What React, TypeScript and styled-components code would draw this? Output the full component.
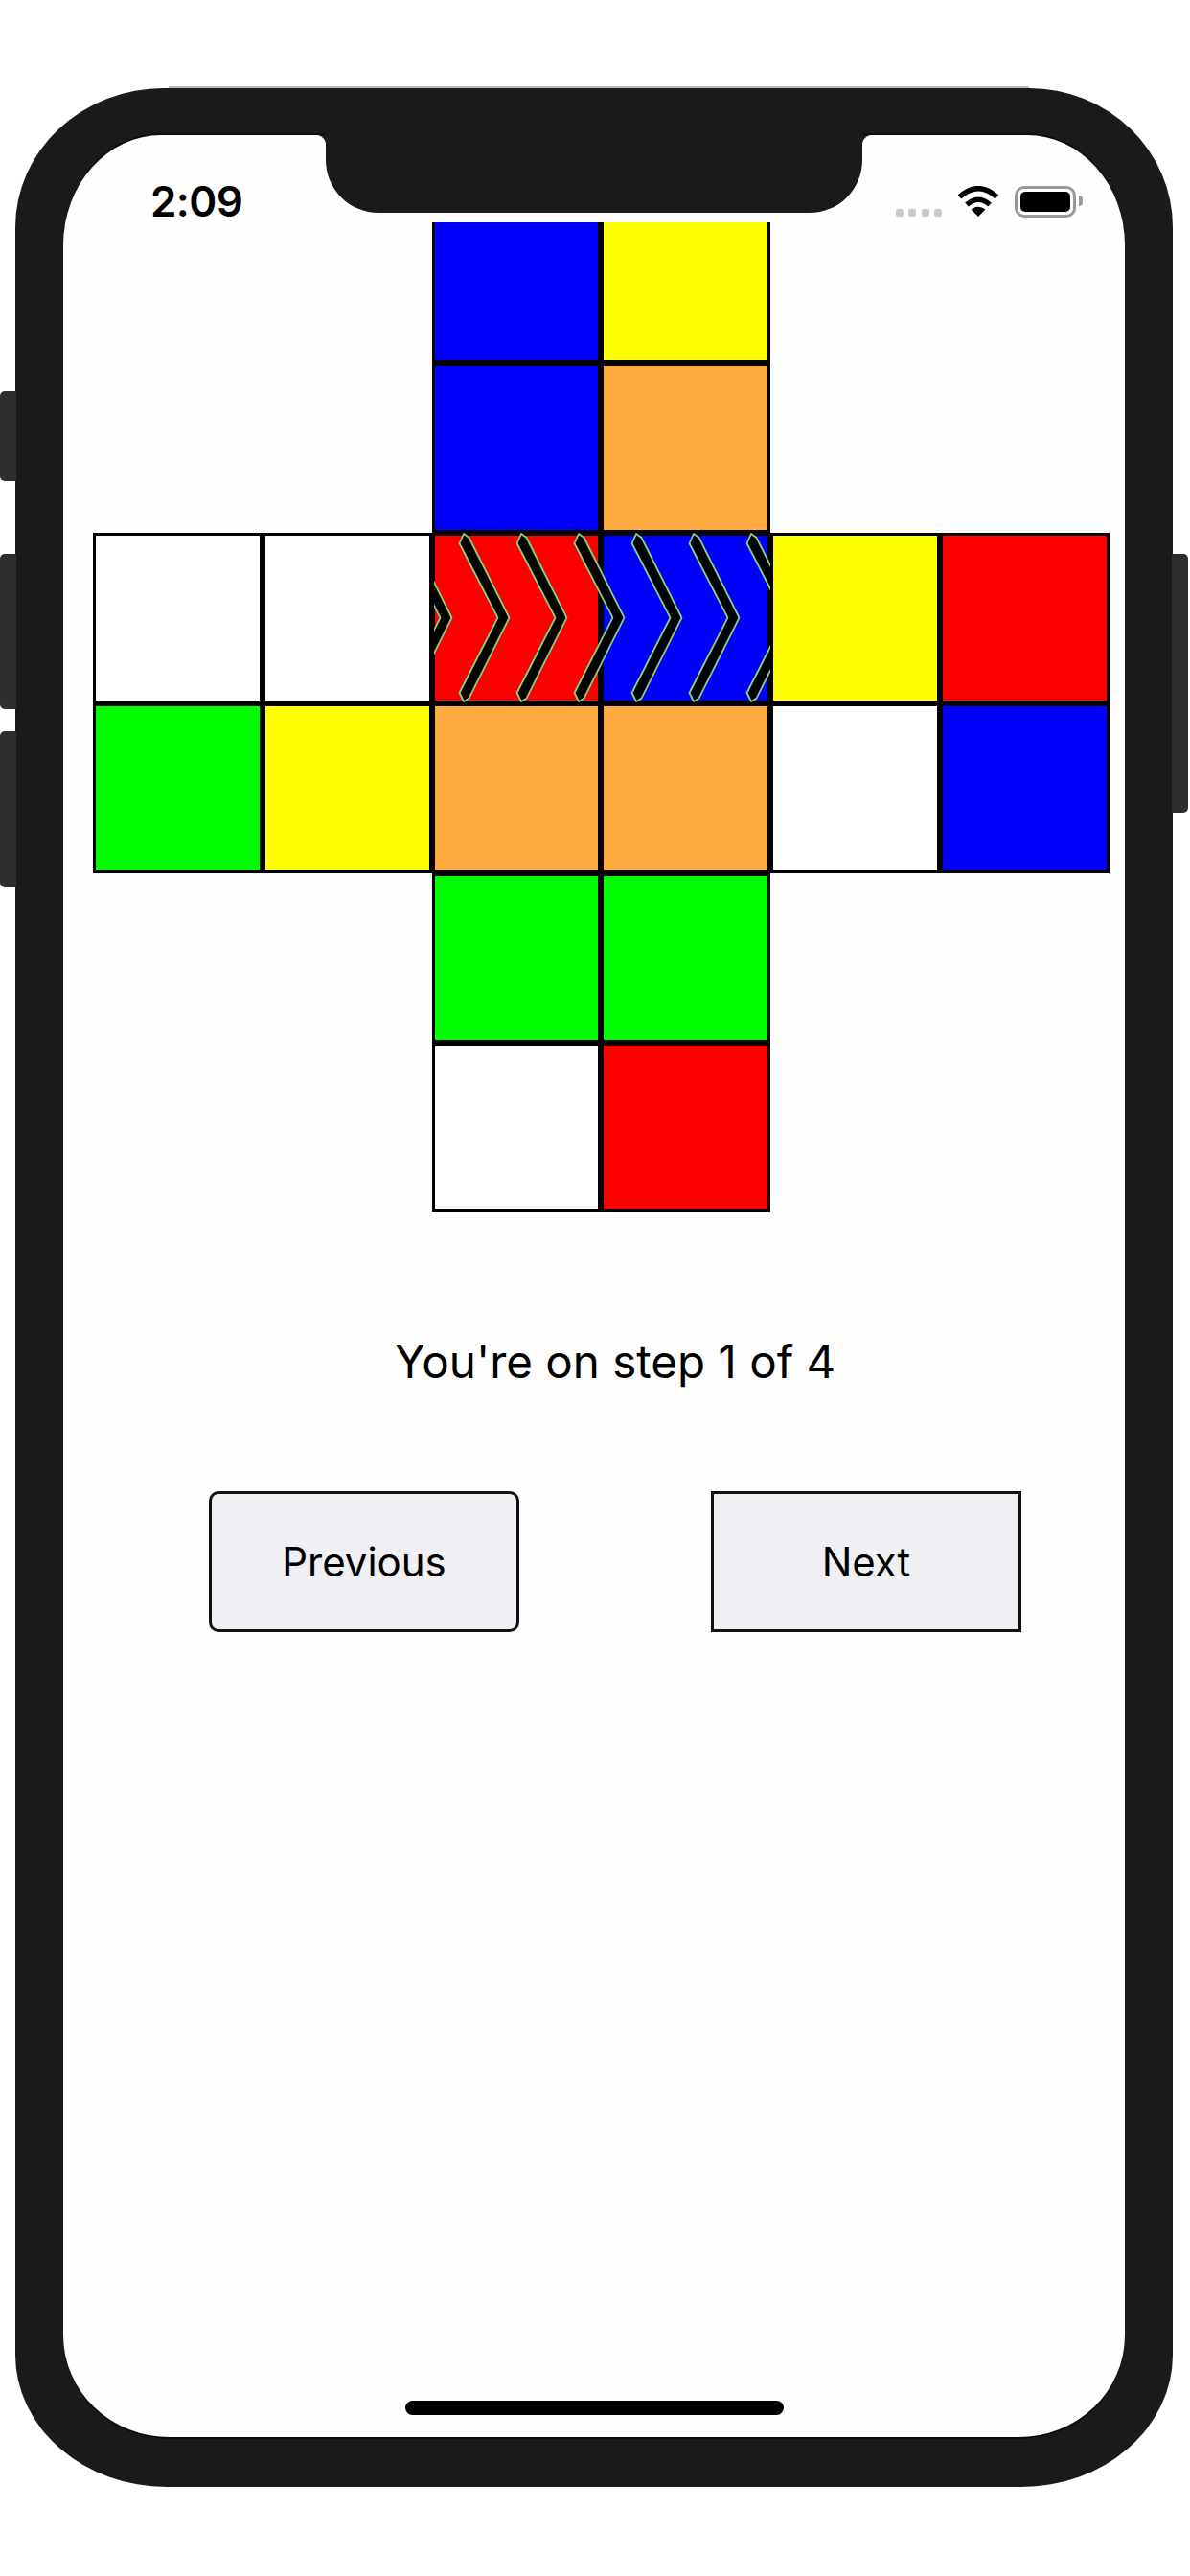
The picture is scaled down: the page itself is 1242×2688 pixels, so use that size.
import React from "react";
import styled, { createGlobalStyle } from "styled-components";

const GlobalStyle = createGlobalStyle`
  html, body {
    margin: 0;
    padding: 0;
    background: #fff;
  }
  body {
    font-family: Inter, "Liberation Sans", sans-serif;
    color: #000;
  }
`;

const Page = styled.div`
  width: 1242px;
  height: 2688px;
  padding: 92px 0 0 16px;
  box-sizing: border-box;
  overflow: hidden;
`;

const Device = styled.div`
  position: relative;
  width: 1208px;
  height: 2503px;
  padding: 49px 50px 52px 50px;
  box-sizing: border-box;
  background: #1a1a1a;
  border-radius: 155px 150px 158px 158px / 145px 145px 138px 138px;
`;

const TopEdge = styled.div`
  position: absolute;
  top: -2px;
  left: 160px;
  right: 150px;
  height: 2px;
  background: #bbb;
`;

const SideKey = styled.div<{ $side: "left" | "right"; $top: number; $height: number }>`
  position: absolute;
  top: ${(p) => p.$top}px;
  height: ${(p) => p.$height}px;
  width: 17px;
  background: #2e2e2e;
  ${(p) =>
    p.$side === "left"
      ? "left: -16px; border-radius: 5px 0 0 5px;"
      : "right: -16px; border-radius: 0 5px 5px 0;"}
`;

const Screen = styled.div`
  position: relative;
  display: flex;
  flex-direction: column;
  width: 100%;
  height: 100%;
  background: #fefefe;
  border-radius: 102px 102px 111px 111px / 115px 115px 106px 106px;
  box-shadow: 0 -2px 0 #0c0c0c, 0 2px 0 #0c0c0c;
`;

const Notch = styled.div`
  position: absolute;
  top: -3px;
  left: 274px;
  width: 560px;
  height: 84px;
  background: #1a1a1a;
  border-radius: 0 0 55px 55px;

  &::before,
  &::after {
    content: "";
    position: absolute;
    top: 3px;
    width: 10px;
    height: 10px;
  }
  &::before {
    left: -10px;
    background: radial-gradient(circle at 0 100%, transparent 9.5px, #1a1a1a 10.5px);
  }
  &::after {
    right: -10px;
    background: radial-gradient(circle at 100% 100%, transparent 9.5px, #1a1a1a 10.5px);
  }
`;

const StatusBar = styled.div`
  display: flex;
  justify-content: space-between;
  align-items: flex-start;
  height: 91px;
  padding: 53px 44px 0 91px;
  box-sizing: border-box;
  flex: none;
`;

const Clock = styled.div`
  font-size: 44px;
  font-weight: 600;
  line-height: 33px;
  letter-spacing: -0.6px;
`;

const StatusIcons = styled.div`
  display: flex;
  align-items: flex-start;
`;

const SignalDots = styled.div`
  display: flex;
  gap: 5.5px;
  margin: 24px 16px 0 0;
`;

const SignalDot = styled.span`
  width: 8px;
  height: 8px;
  border-radius: 2.5px;
  background: #c9c9c9;
`;

const WifiIcon = styled.svg`
  display: block;
  width: 44px;
  height: 32px;
  margin-right: 16px;
`;

const Battery = styled.div`
  position: relative;
  width: 64px;
  height: 33px;
  padding: 3px;
  box-sizing: border-box;
  border: 3px solid #999;
  border-radius: 10px;
  margin-right: 7px;

  &::after {
    content: "";
    position: absolute;
    right: -10px;
    top: 7px;
    width: 4px;
    height: 11px;
    background: #999;
    border-radius: 0 5px 5px 0;
  }
`;

const BatteryFill = styled.div`
  width: 100%;
  height: 100%;
  background: #000;
  border-radius: 5px;
`;

const Net = styled.div`
  display: grid;
  grid-template-columns: repeat(6, 176.75px);
  grid-template-rows: 147px repeat(5, 177.25px);
  margin-left: 31px;
  flex: none;
`;

const Sticker = styled.div<{ $color: string; $col: number; $row: number }>`
  grid-column: ${(p) => p.$col};
  grid-row: ${(p) => p.$row};
  background: ${(p) => p.$color};
  border: 3px solid #000;
  ${(p) => (p.$row === 1 ? "border-top: none;" : "")}
  box-sizing: border-box;
`;

const ArrowLayer = styled.svg`
  grid-column: 3 / 5;
  grid-row: 3;
  display: block;
  width: 100%;
  height: 100%;
  pointer-events: none;
`;

const StepLabel = styled.div`
  margin: 126px 0 0 152px;
  width: 848px;
  text-align: center;
  font-size: 47.5px;
  line-height: 60px;
  flex: none;
`;

const Controls = styled.div`
  display: flex;
  justify-content: space-between;
  width: 848px;
  margin: 105px 0 0 152px;
  flex: none;
`;

const StepButton = styled.button<{ $rounded?: boolean }>`
  width: 324px;
  height: 147px;
  padding: 0;
  background: #efeff4;
  border: 3px solid #111;
  border-radius: ${(p) => (p.$rounded ? "10px" : "0")};
  font-family: inherit;
  font-size: 42px;
  color: #000;
`;

const HomeBar = styled.div`
  width: 395px;
  height: 15px;
  margin: auto auto 23px;
  border-radius: 8px;
  background: #000;
  flex: none;
`;

const BLUE = "#0000ff";
const YELLOW = "#ffff00";
const ORANGE = "#ffa941";
const RED = "#ff0000";
const GREEN = "#00ff00";
const WHITE = "#ffffff";

const stickers: [number, number, string][] = [
  [3, 1, BLUE],
  [4, 1, YELLOW],
  [3, 2, BLUE],
  [4, 2, ORANGE],
  [1, 3, WHITE],
  [2, 3, WHITE],
  [3, 3, RED],
  [4, 3, BLUE],
  [5, 3, YELLOW],
  [6, 3, RED],
  [1, 4, GREEN],
  [2, 4, YELLOW],
  [3, 4, ORANGE],
  [4, 4, ORANGE],
  [5, 4, WHITE],
  [6, 4, BLUE],
  [3, 5, GREEN],
  [4, 5, GREEN],
  [3, 6, WHITE],
  [4, 6, RED],
];

// one chevron drawn at the position of the second one, the rest are shifted copies
const CHEVRON = "33 1 38.5 5 80.5 88.7 38.5 172.7 33 176 28.5 167 68.5 88.7 28.5 11";
const arrowShifts = [-60, 0, 60, 120, 180, 240, 300];

function Arrows() {
  return (
    <ArrowLayer viewBox="0 0 353.5 177.25" preserveAspectRatio="none">
      <defs>
        <clipPath id="arrow-clip">
          <rect x="2" y="0" width="351.5" height="177.25" />
        </clipPath>
      </defs>
      <g clipPath="url(#arrow-clip)">
        {arrowShifts.map((shift) => (
          <polygon
            key={shift}
            points={CHEVRON}
            transform={`translate(${shift} 0)`}
            fill="#000"
            stroke="#86d47e"
            strokeWidth="1.8"
            strokeLinejoin="round"
          />
        ))}
      </g>
    </ArrowLayer>
  );
}

export default function App() {
  return (
    <Page>
      <GlobalStyle />
      <Device>
        <TopEdge />
        <SideKey $side="left" $top={316} $height={94} />
        <SideKey $side="left" $top={486} $height={162} />
        <SideKey $side="left" $top={671} $height={163} />
        <SideKey $side="right" $top={486} $height={270} />
        <Screen>
          <Notch />
          <StatusBar>
            <Clock>2:09</Clock>
            <StatusIcons>
              <SignalDots>
                <SignalDot />
                <SignalDot />
                <SignalDot />
                <SignalDot />
              </SignalDots>
              <WifiIcon viewBox="0 0 44 32">
                <path d="M2.5 11.5 Q22 -6 41.5 11.5" fill="none" stroke="#000" strokeWidth="5.5" />
                <path d="M10 19.5 Q22 9 34 19.5" fill="none" stroke="#000" strokeWidth="5.5" />
                <path d="M22 32 L14.5 24.5 Q22 19 29.5 24.5 Z" fill="#000" />
              </WifiIcon>
              <Battery>
                <BatteryFill />
              </Battery>
            </StatusIcons>
          </StatusBar>
          <Net>
            {stickers.map(([col, row, color]) => (
              <Sticker key={`${col}-${row}`} $col={col} $row={row} $color={color} />
            ))}
            <Arrows />
          </Net>
          <StepLabel>You're on step 1 of 4</StepLabel>
          <Controls>
            <StepButton $rounded>Previous</StepButton>
            <StepButton>Next</StepButton>
          </Controls>
          <HomeBar />
        </Screen>
      </Device>
    </Page>
  );
}
